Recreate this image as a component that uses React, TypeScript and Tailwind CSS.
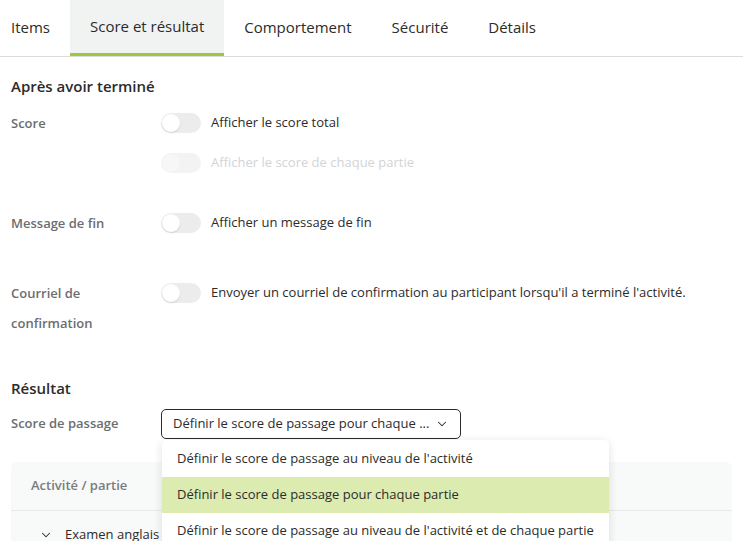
import { ChevronDown } from 'lucide-react'

const tabs = ['Items', 'Score et résultat', 'Comportement', 'Sécurité', 'Détails']

function Toggle({ disabled = false }: { disabled?: boolean }) {
  return (
    <span
      className={`relative inline-block h-5 w-10 shrink-0 rounded-full ${
        disabled ? 'bg-[#f3f3f3]' : 'bg-[#ececec]'
      }`}
    >
      <span
        className={`absolute left-[1px] top-[1px] h-[18px] w-[18px] rounded-full ${
          disabled ? 'bg-[#f7f7f7]' : 'bg-white shadow-[0_1px_2px_rgba(0,0,0,0.12)]'
        }`}
      />
    </span>
  )
}

function Row({ label, children }: { label: React.ReactNode; children: React.ReactNode }) {
  return (
    <div className="flex">
      <div className="w-[150px] shrink-0 text-[13px] font-semibold leading-[30px] text-[#6b6e70]">
        {label}
      </div>
      <div className="flex flex-col gap-[10px]">{children}</div>
    </div>
  )
}

function Option({ text, disabled = false }: { text: string; disabled?: boolean }) {
  return (
    <div className="flex h-[30px] items-center gap-[10px]">
      <Toggle disabled={disabled} />
      <span className={`text-[13px] ${disabled ? 'text-[#d3d4d5]' : 'text-[#2b2b2b]'}`}>{text}</span>
    </div>
  )
}

export default function App() {
  return (
    <div className="h-[541px] w-[743px] overflow-hidden bg-white font-['Open_Sans',sans-serif] text-[#2b2b2b]">
      <div className="flex h-[57px] border-b border-[#dcdcdc]">
        {tabs.map((t, i) => (
          <div
            key={t}
            className={`flex items-center pb-[2px] text-[15px] ${
              i === 0 ? 'pl-[11px] pr-[20px]' : 'px-[20px]'
            } ${i === 1 ? 'border-b-[3px] border-[#9bc93c] bg-[#f1f2f2] pb-0 pt-[1px]' : ''}`}
          >
            {t}
          </div>
        ))}
      </div>

      <div className="px-[11px]">
        <h2 className="mt-[18px] text-[15px] font-semibold">Après avoir terminé</h2>
        <div className="mt-[10px] flex flex-col gap-[30px]">
          <Row label="Score">
            <Option text="Afficher le score total" />
            <Option text="Afficher le score de chaque partie" disabled />
          </Row>
          <Row label="Message de fin">
            <Option text="Afficher un message de fin" />
          </Row>
          <div className="mt-[10px]">
            <Row
              label={
                <>
                  Courriel de
                  <br />
                  confirmation
                </>
              }
            >
              <Option text="Envoyer un courriel de confirmation au participant lorsqu'il a terminé l'activité." />
            </Row>
          </div>
        </div>

        <h2 className="mt-[39px] text-[15px] font-semibold">Résultat</h2>
        <div className="relative mt-[10px] flex items-center">
          <div className="w-[150px] text-[13px] font-semibold text-[#6b6e70]">Score de passage</div>
          <div className="flex h-[30px] w-[300px] items-center justify-between rounded-[5px] border border-[#2b2b2b] px-[11px] text-[13px]">
            <span>Définir le score de passage pour chaque ...</span>
            <ChevronDown size={14} strokeWidth={1.8} />
          </div>

          <div className="absolute left-[151px] top-[31px] z-10 w-[447px] rounded-[5px] bg-white py-[1px] shadow-[0_2px_10px_rgba(0,0,0,0.12)]">
            <div className="flex h-[36px] items-center px-[15px] text-[13px]">
              Définir le score de passage au niveau de l'activité
            </div>
            <div className="flex h-[36px] items-center bg-[#dcebb0] px-[15px] text-[13px]">
              Définir le score de passage pour chaque partie
            </div>
            <div className="flex h-[36px] items-center px-[15px] text-[13px]">
              Définir le score de passage au niveau de l'activité et de chaque partie
            </div>
          </div>
        </div>

        <div className="mt-[23px] rounded-t-[6px] bg-[#f8f9f9]">
          <div className="flex h-[49px] items-center border-b border-[#e8e9e9] px-[20px] text-[13px] font-semibold text-[#7a7c7e]">
            Activité / partie
          </div>
          <div className="flex h-[48px] items-center gap-[12px] px-[28px] text-[13px]">
            <ChevronDown size={14} strokeWidth={1.8} />
            <span>Examen anglais</span>
          </div>
        </div>
      </div>
    </div>
  )
}
